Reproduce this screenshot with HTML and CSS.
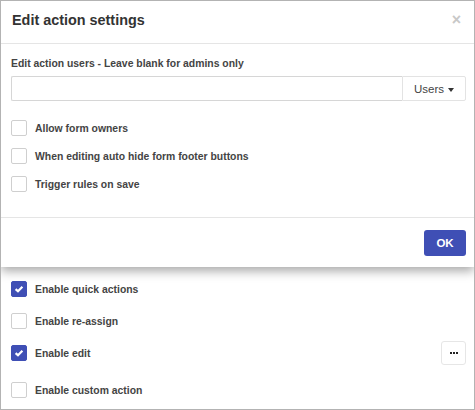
FILE: index.html
```html
<!DOCTYPE html>
<html>
<head>
<meta charset="utf-8">
<link rel="stylesheet" href="styles.css">
</head>
<body>
<div class="frame">
  <div class="modal">
    <div class="modal-header">
      <h4 class="modal-title">Edit action settings</h4>
      <span class="close">&times;</span>
    </div>
    <div class="modal-body">
      <div class="field-label">Edit action users - Leave blank for admins only</div>
      <div class="input-group">
        <div class="text-input"></div>
        <div class="users-btn">Users <span class="caret"></span></div>
      </div>
      <div class="check-list">
        <div class="check-row"><span class="box"></span><span class="check-text">Allow form owners</span></div>
        <div class="check-row"><span class="box"></span><span class="check-text">When editing auto hide form footer buttons</span></div>
        <div class="check-row"><span class="box"></span><span class="check-text">Trigger rules on save</span></div>
      </div>
    </div>
    <div class="modal-footer">
      <div class="ok-btn">OK</div>
    </div>
  </div>
  <div class="page-list">
    <div class="page-row"><span class="box checked"><svg viewBox="0 0 16 16" width="16" height="16"><path d="M4.6 8.1 L7 10.3 L11.4 5.8" fill="none" stroke="#fff" stroke-width="2.2"/></svg></span><span class="check-text">Enable quick actions</span></div>
    <div class="page-row"><span class="box"></span><span class="check-text">Enable re-assign</span></div>
    <div class="page-row"><span class="box checked"><svg viewBox="0 0 16 16" width="16" height="16"><path d="M4.6 8.1 L7 10.3 L11.4 5.8" fill="none" stroke="#fff" stroke-width="2.2"/></svg></span><span class="check-text">Enable edit</span><span class="spacer"></span><span class="dots-btn"><svg viewBox="0 0 8 2" width="8" height="2"><rect x="0" y="0" width="2" height="2" fill="#222"/><rect x="3" y="0" width="2" height="2" fill="#222"/><rect x="6" y="0" width="2" height="2" fill="#222"/></svg></span></div>
    <div class="page-row last"><span class="box"></span><span class="check-text">Enable custom action</span></div>
  </div>
</div>
</body>
</html>
```
FILE: styles.css
```css
* { box-sizing: border-box; }
html, body { margin: 0; padding: 0; background: #fff; }
body { font-family: "Liberation Sans", Arial, sans-serif; color: #333; }

.frame {
  width: 475px;
  height: 410px;
  border: 1px solid #b3b3b3;
  overflow: hidden;
  background: #fff;
}

.modal {
  background: #fff;
  box-shadow: 0 4px 10px rgba(0,0,0,0.35);
  position: relative;
}

.modal-header {
  display: flex;
  justify-content: space-between;
  align-items: flex-start;
  padding: 9px 11px 13px 11px;
  border-bottom: 1px solid #e5e5e5;
}
.modal-title {
  margin: 0;
  font-size: 14.4px;
  line-height: 20px;
  font-weight: bold;
  color: #333;
}
.close {
  font-size: 16px;
  line-height: 12px;
  margin-top: 4px;
  margin-right: 2px;
  color: #c8c8c8;
  font-weight: bold;
}

.modal-body {
  padding: 11px 8px 19px 10px;
}
.field-label {
  font-size: 10.4px;
  line-height: 17px;
  font-weight: bold;
  color: #444;
}
.input-group {
  display: flex;
  margin-top: 4px;
  height: 25px;
}
.text-input {
  flex: 1;
  border: 1px solid #d6d6d6;
  border-right: none;
  border-radius: 2px 0 0 2px;
}
.users-btn {
  width: 64px;
  border: 1px solid #e3e3e3;
  border-radius: 0 2px 2px 0;
  display: flex;
  align-items: center;
  justify-content: center;
  font-size: 11.5px;
  color: #444;
  gap: 4px;
}
.caret {
  width: 0;
  height: 0;
  border-left: 3.5px solid transparent;
  border-right: 3.5px solid transparent;
  border-top: 4px solid #333;
  margin-top: 2px;
}

.check-list { margin-top: 13px; }
.check-row {
  height: 28px;
  display: flex;
  align-items: center;
}
.box {
  width: 16px;
  height: 16px;
  border: 1px solid #cfcfcf;
  border-radius: 2px;
  background: #fff;
  flex: none;
  display: flex;
}
.box.checked {
  background: #3f4fb5;
  border-color: #3f4fb5;
}
.box.checked svg { margin: -1px; }
.check-text {
  margin-left: 8px;
  font-size: 10.4px;
  font-weight: bold;
  color: #444;
}

.modal-footer {
  border-top: 1px solid #e5e5e5;
  padding: 12px 8px 11px;
  display: flex;
  justify-content: flex-end;
}
.ok-btn {
  width: 42px;
  height: 26px;
  background: #3f4fb5;
  color: #fff;
  border-radius: 3px;
  font-size: 11.5px;
  font-weight: bold;
  display: flex;
  align-items: center;
  justify-content: center;
}

.page-list {
  padding: 6px 8px 0 10px;
}
.page-row {
  height: 32px;
  display: flex;
  align-items: center;
}
.page-row.last { margin-top: 5px; }
.spacer { flex: 1; }
.dots-btn {
  width: 25px;
  height: 24px;
  border: 1px solid #e6e6e6;
  border-radius: 3px;
  display: flex;
  align-items: center;
  justify-content: center;
}
```
